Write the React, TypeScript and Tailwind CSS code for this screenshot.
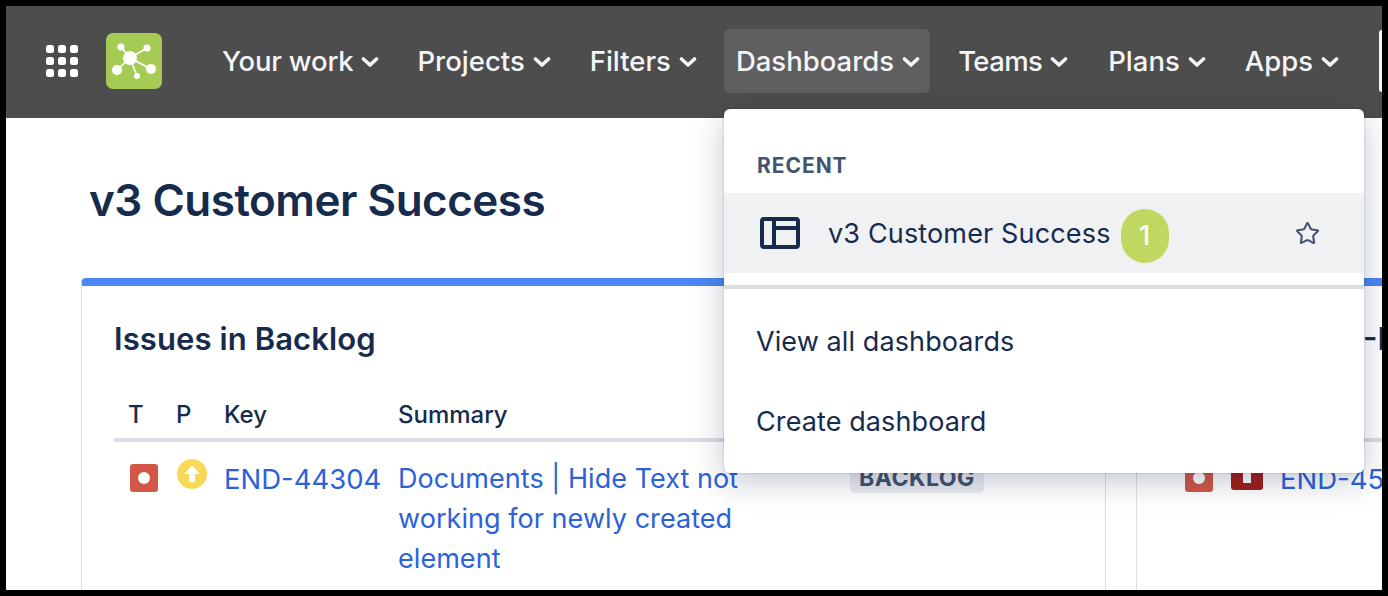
import { Star } from "lucide-react"

const NAV = [
  { label: "Your work", cls: "ml-[60px] tracking-[-0.2px]" },
  { label: "Projects", cls: "ml-[38px]" },
  { label: "Filters", cls: "ml-[39px]" },
  { label: "Dashboards", cls: "ml-[27px] bg-[#5f5f5f] pl-[12px] pr-[10px]" },
  { label: "Teams", cls: "ml-[28px] tracking-[-0.6px]" },
  { label: "Plans", cls: "ml-[40px]" },
  { label: "Apps", cls: "ml-[39px]" },
]

function GridIcon() {
  return (
    <div className="grid grid-cols-3 gap-[4px] w-[32px] shrink-0">
      {Array.from({ length: 9 }).map((_, i) => (
        <div key={i} className="w-[8px] h-[8px] rounded-[2.5px] bg-white" />
      ))}
    </div>
  )
}

function Logo() {
  return (
    <div className="ml-[28px] w-[56px] h-[56px] rounded-[7px] bg-[#a5cb55] shrink-0">
      <svg viewBox="0 0 56 56" className="w-[56px] h-[56px]">
        <g stroke="#fff" strokeWidth="1.6">
          <line x1="24" y1="25" x2="15" y2="14" />
          <line x1="24" y1="25" x2="41" y2="15" />
          <line x1="24" y1="25" x2="11" y2="37" />
          <line x1="24" y1="25" x2="45" y2="36" />
          <line x1="24" y1="25" x2="31" y2="43" />
        </g>
        <g fill="#fff">
          <circle cx="24" cy="25" r="7" />
          <circle cx="15" cy="14" r="3.6" />
          <circle cx="41" cy="15" r="3.6" />
          <circle cx="11" cy="37" r="5" />
          <circle cx="45" cy="36" r="5" />
          <circle cx="31" cy="43" r="3" />
        </g>
      </svg>
    </div>
  )
}

function Chevron() {
  return (
    <svg viewBox="0 0 18 12" className="ml-[8px] w-[18px] h-[12px] shrink-0" fill="none">
      <path d="M2.5 3 9 9l6.5-6" stroke="#f4f5f7" strokeWidth="3.6" strokeLinecap="round" strokeLinejoin="round" />
    </svg>
  )
}

function BugIcon() {
  return (
    <div className="w-[28px] h-[28px] rounded-[3px] flex items-center justify-center shrink-0 bg-[#d35746]">
      <div className="w-[12px] h-[12px] rounded-full bg-white" />
    </div>
  )
}

function MajorIcon() {
  return (
    <svg viewBox="0 0 30 30" className="w-[30px] h-[30px] shrink-0">
      <circle cx="15" cy="15" r="15" fill="#f8d957" />
      <path d="M15 6.5 23 15h-5v8h-6v-8H7z" fill="#fff" />
    </svg>
  )
}

function HighestIcon() {
  return (
    <svg viewBox="0 0 32 28" className="w-[32px] h-[28px] shrink-0">
      <rect width="32" height="28" rx="3" fill="#a1201a" />
      <path d="M16 2 25 11h-5v10h-8V11H7z" fill="#fff" />
    </svg>
  )
}

function BoardIcon() {
  return (
    <svg viewBox="0 0 40 32" className="w-[40px] h-[32px] shrink-0" fill="none" stroke="#172b4d" strokeWidth="4">
      <rect x="2" y="2" width="36" height="28" rx="2" />
      <line x1="14" y1="2" x2="14" y2="30" />
      <line x1="14" y1="11" x2="38" y2="11" />
    </svg>
  )
}

function DashboardsMenu() {
  return (
    <div className="absolute left-[718px] top-[103px] w-[640px] h-[364px] bg-white rounded-[6px] shadow-[0_8px_32px_rgba(9,30,66,0.25),0_0_2px_rgba(9,30,66,0.3)] z-10">
      <div className="pl-[33px] pt-[44px] h-[84px] text-[21px] leading-[26px] font-bold tracking-[0.95px] text-[#44546f]">
        RECENT
      </div>
      <div className="flex items-center h-[80px] bg-[#f0f1f3] pl-[36px] pr-[44px]">
        <BoardIcon />
        <span className="ml-[28px] pt-[2px] text-[27px] tracking-[0.15px] text-[#172b4d]">v3 Customer Success</span>
        <span className="ml-[10px] mt-[6px] w-[48px] h-[54px] rounded-full bg-[#c0d860] text-white text-[27px] font-medium flex items-center justify-center">
          1
        </span>
        <Star className="ml-auto text-[#44546f]" size={25} strokeWidth={2} />
      </div>
      <div className="mt-[12px] h-[4px] bg-[#dcdde2]" />
      <div className="pl-[32px] pt-[13px] text-[27px] tracking-[0.1px] text-[#172b4d]">
        <div className="h-[80px] flex items-center">View all dashboards</div>
        <div className="h-[80px] flex items-center">Create dashboard</div>
      </div>
    </div>
  )
}

export default function App() {
  return (
    <div className="w-[1388px] h-[596px] bg-black p-[6px] overflow-hidden font-['Inter',sans-serif]">
      <div className="relative w-[1376px] h-[584px] bg-white overflow-hidden">
        <header className="flex items-center h-[112px] bg-[#4d4d4d] pl-[40px] pb-[2px]">
          <GridIcon />
          <Logo />
          {NAV.map((n) => (
            <div
              key={n.label}
              className={`${n.cls} flex items-center h-[64px] pt-[2px] rounded-[5px] text-[27.5px] font-medium text-[#f4f5f7] shrink-0`}
            >
              {n.label}
              <Chevron />
            </div>
          ))}
        </header>
        <div className="absolute right-0 top-[24px] w-[3px] h-[62px] rounded-l-[4px] bg-[#f4f5f7]" />

        <main className="pl-[75px]">
          <h1 className="pl-[8px] pt-[54px] h-[160px] text-[44px] leading-[56px] font-semibold tracking-[-0.5px] text-[#172b4d]">
            v3 Customer Success
          </h1>
          <div className="flex gap-[30px]">
            <section className="w-[1025px] h-[400px] shrink-0 border-x border-[#dcdde2] border-t-[8px] border-t-[#4c86f5] rounded-t-[5px] pl-[32px]">
              <h2 className="pt-[33px] text-[31px] leading-[40px] font-semibold tracking-[0.1px] text-[#172b4d]">
                Issues in Backlog
              </h2>
              <div className="mt-[37px] flex items-center h-[38px] text-[24px] font-medium text-[#172b4d]">
                <span className="ml-[14px] w-[48px]">T</span>
                <span className="w-[48px]">P</span>
                <span className="w-[174px]">Key</span>
                <span>Summary</span>
              </div>
              <div className="mt-[4px] h-[4px] bg-[#dcdde2]" />
              <div className="flex mt-[17px]">
                <div className="ml-[16px] mt-[5px] w-[47px]">
                  <BugIcon />
                </div>
                <div className="w-[47px]">
                  <MajorIcon />
                </div>
                <a className="w-[174px] text-[27.5px] leading-[40px] text-[#2b62d9]">END-44304</a>
                <a className="w-[352px] text-[27px] leading-[40px] tracking-[0.05px] text-[#2b62d9]">
                  Documents | Hide Text not working for newly created element
                </a>
                <span className="ml-[100px] mt-[4px] h-[30px] px-[9px] rounded-[5px] bg-[#ebecf0] text-[23px] leading-[30px] font-bold tracking-[0.5px] text-[#42526e]">
                  BACKLOG
                </span>
              </div>
            </section>
            <section className="flex-1 h-[400px] border-l border-[#dcdde2] border-t-[8px] border-t-[#4c86f5] pl-[48px] overflow-hidden">
              <h2 className="pt-[33px] -ml-[48px] pl-[226px] text-[31px] leading-[40px] font-semibold text-[#172b4d] whitespace-nowrap">
                -F
              </h2>
              <div className="mt-[79px] h-[4px] -ml-[48px] bg-[#dcdde2]" />
              <div className="flex mt-[17px]">
                <div className="mt-[5px] w-[46px] shrink-0">
                  <BugIcon />
                </div>
                <div className="mt-[3px] w-[49px] shrink-0">
                  <HighestIcon />
                </div>
                <a className="text-[27.5px] leading-[40px] text-[#2b62d9] whitespace-nowrap">END-45</a>
              </div>
            </section>
          </div>
        </main>

        <DashboardsMenu />
      </div>
    </div>
  )
}
